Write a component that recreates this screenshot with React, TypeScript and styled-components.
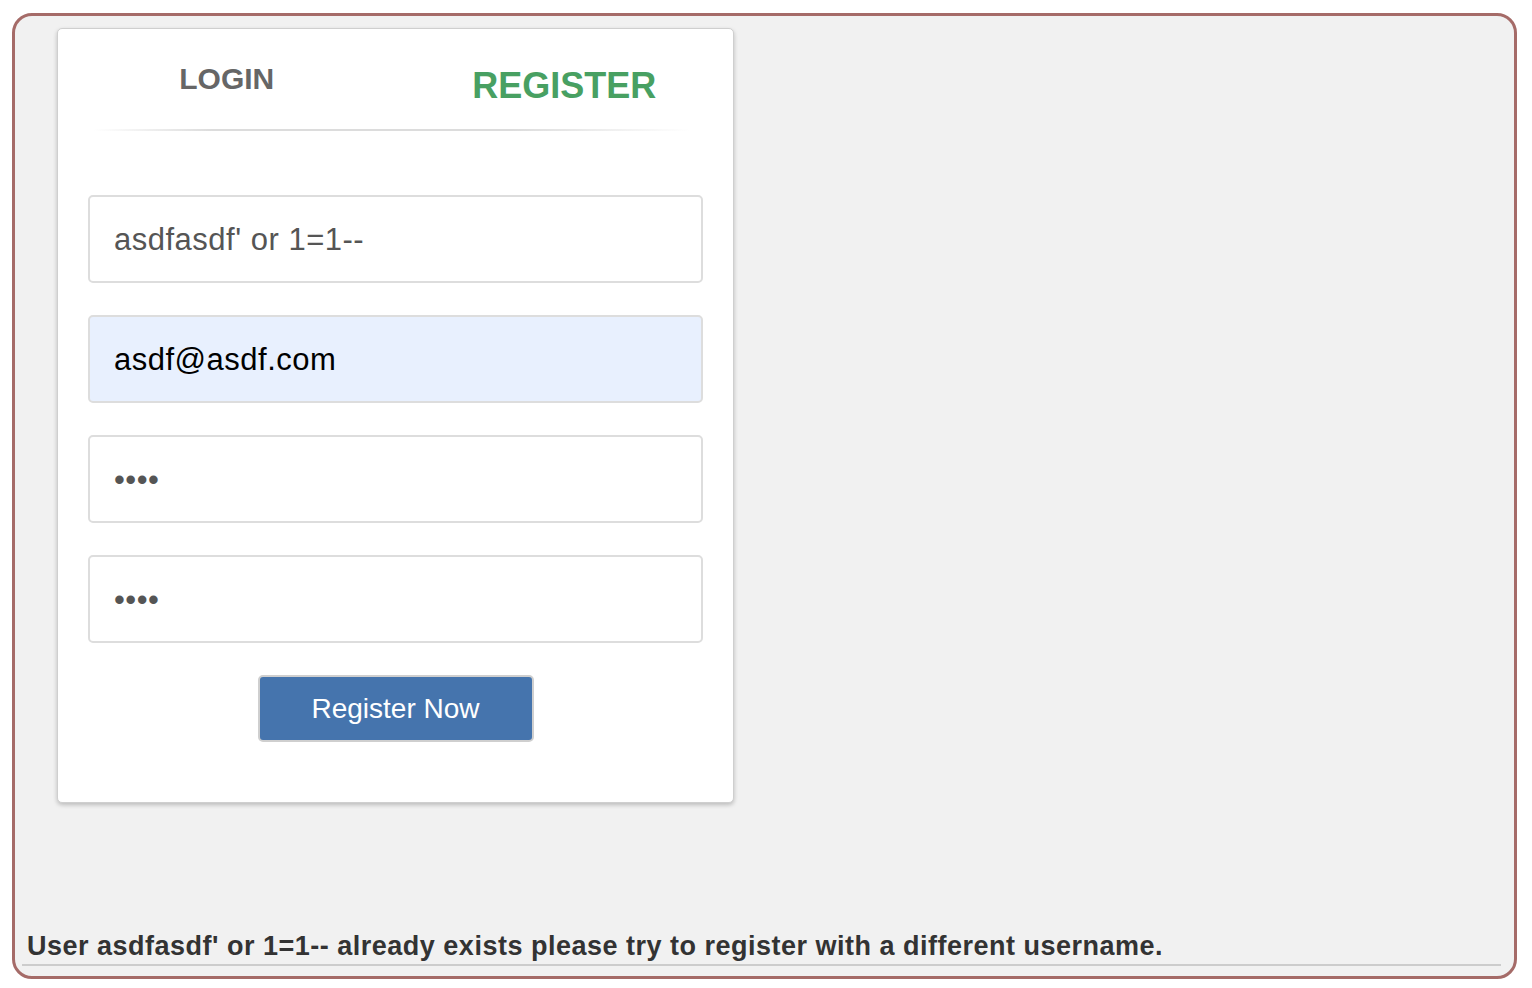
import React from 'react';
import styled, { createGlobalStyle } from 'styled-components';

const GlobalStyle = createGlobalStyle`
  html, body {
    margin: 0;
    padding: 0;
    background: #ffffff;
  }
  body {
    font-family: "Liberation Sans", Arial, Helvetica, sans-serif;
  }
`;

const Frame = styled.div`
  box-sizing: border-box;
  margin: 13px 15px 0 12px;
  height: 966px;
  border: 3px solid #a56b68;
  border-radius: 20px;
  background: #f1f1f1;
  display: flex;
  flex-direction: column;
  padding: 12px 0 10px 42px;
`;

const Card = styled.div`
  box-sizing: border-box;
  width: 677px;
  background: #ffffff;
  border: 1.5px solid #cfcfcf;
  border-radius: 5px;
  box-shadow: 0 2px 4px rgba(0, 0, 0, 0.22);
  padding: 0 30px 60px 30px;
`;

const Tabs = styled.div`
  display: flex;
  padding-top: 33px;
  height: 67px;
  margin: 0 -30px;
`;

const Tab = styled.div<{ $active?: boolean }>`
  flex: 1;
  text-align: center;
  font-weight: bold;
  font-size: ${p => (p.$active ? '36px' : '30px')};
  padding-top: ${p => (p.$active ? '3px' : '0')};
  color: ${p => (p.$active ? '#48a062' : '#666666')};
`;

const Divider = styled.div`
  height: 2px;
  margin: 0 12px 64px 5px;
  background: linear-gradient(to right, rgba(221, 221, 221, 0), #dcdcdc 20%, #dcdcdc 70%, rgba(221, 221, 221, 0));
`;

const Form = styled.div`
  display: flex;
  flex-direction: column;
  gap: 32px;
`;

const Field = styled.input<{ $filled?: boolean; $dark?: boolean }>`
  box-sizing: border-box;
  width: 100%;
  height: 88px;
  margin: 0;
  padding: 2px 24px 0 24px;
  border: 2px solid #dddddd;
  border-radius: 5px;
  background: ${p => (p.$filled ? '#e8f0fe' : '#ffffff')};
  font-family: "Liberation Sans", Arial, Helvetica, sans-serif;
  font-size: 31px;
  letter-spacing: 0.5px;
  color: ${p => (p.$dark ? '#000000' : '#555555')};
  outline: none;
`;

const ButtonRow = styled.div`
  display: flex;
  justify-content: center;
`;

const Button = styled.button`
  box-sizing: border-box;
  width: 276px;
  height: 67px;
  background: #4574ad;
  border: 2px solid #cfcfcf;
  border-radius: 5px;
  color: #ffffff;
  font-family: "Liberation Sans", Arial, Helvetica, sans-serif;
  font-size: 28px;
  cursor: pointer;
`;

const Message = styled.div`
  margin: auto 13px 0 -35px;
  padding: 0 0 3px 5px;
  border-bottom: 2px solid #cccccc;
  font-size: 27px;
  letter-spacing: 0.5px;
  font-weight: bold;
  color: #333333;
  line-height: 30px;
`;

export default function App() {
  return (
    <>
      <GlobalStyle />
      <Frame>
        <Card>
          <Tabs>
            <Tab>LOGIN</Tab>
            <Tab $active>REGISTER</Tab>
          </Tabs>
          <Divider />
          <Form>
            <Field type="text" readOnly defaultValue="asdfasdf' or 1=1--" />
            <Field type="email" readOnly defaultValue="asdf@asdf.com" $filled $dark />
            <Field type="password" readOnly defaultValue="asdf" />
            <Field type="password" readOnly defaultValue="asdf" />
            <ButtonRow>
              <Button>Register Now</Button>
            </ButtonRow>
          </Form>
        </Card>
        <Message>
          User asdfasdf' or 1=1-- already exists please try to register with a different username.
        </Message>
      </Frame>
    </>
  );
}
